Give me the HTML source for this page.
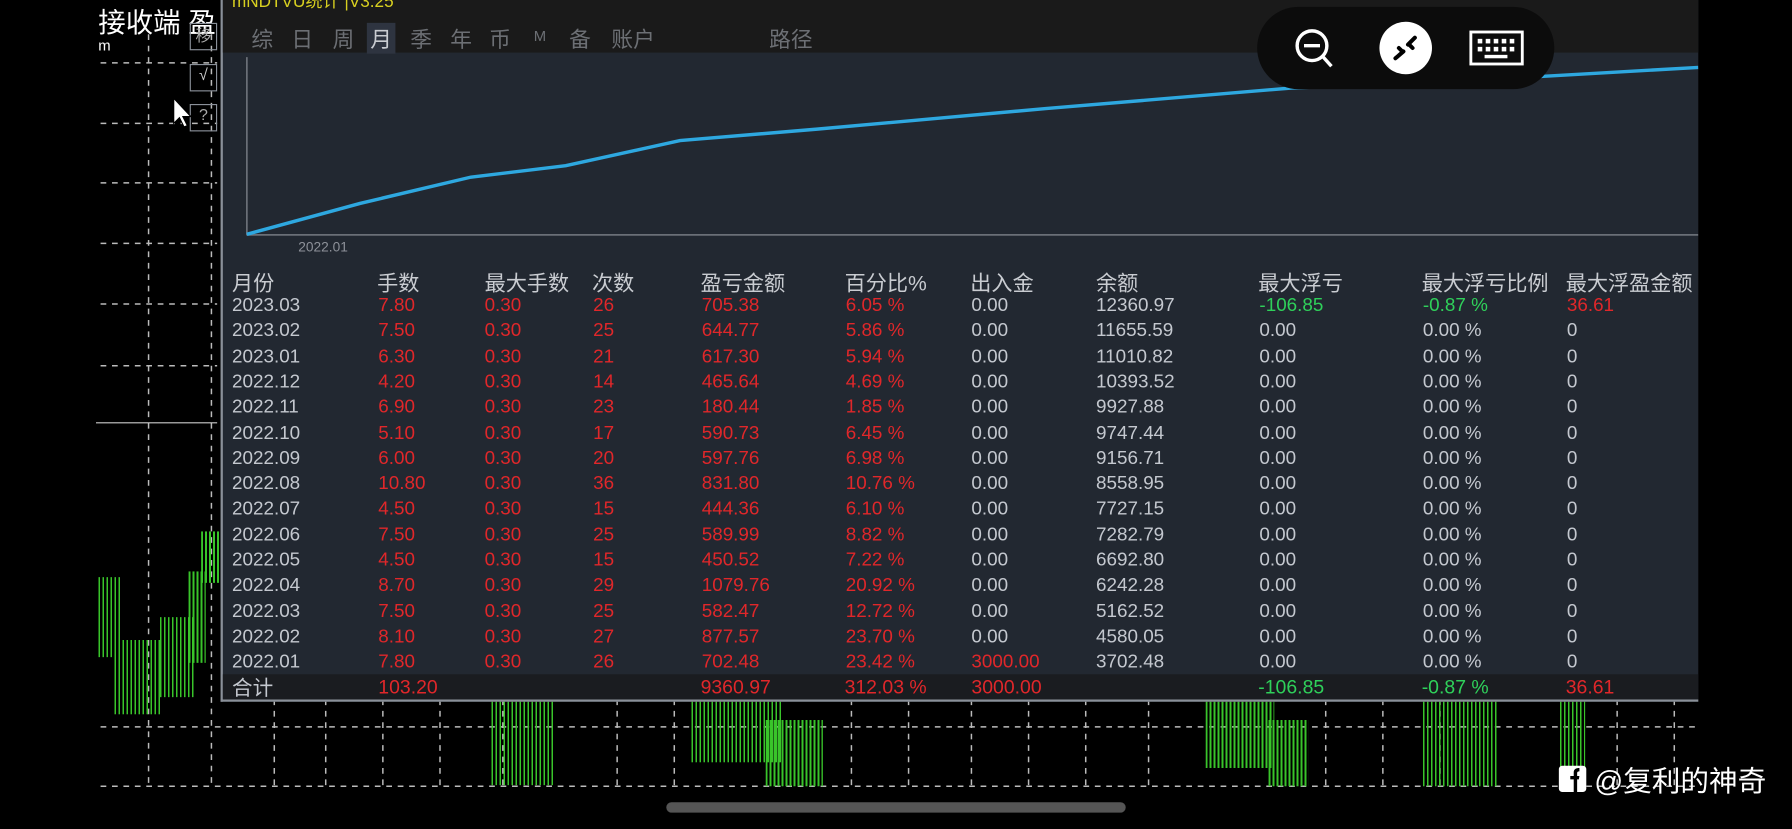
<!DOCTYPE html>
<html><head><meta charset="utf-8"><style>
html,body{margin:0;padding:0;background:#000;width:1792px;height:828px;overflow:hidden}
#w{position:absolute;left:0;top:0;width:1568px;height:725px;transform:scale(1.142857);transform-origin:0 0;background:#000;font-family:"Liberation Sans Narrow","Liberation Sans","Noto Sans CJK SC",sans-serif}
.a{position:absolute;white-space:nowrap}
.panel{position:absolute;left:193px;top:0;width:1291px;height:612px;background:#222831;border-left:2px solid #8a9099;border-bottom:2px solid #8a9099}
.top{position:absolute;left:0;top:0;width:100%;height:46px;background:#1a1a1a}
.tabs span{position:absolute;top:20px;font-size:19px;color:#6c6f74}
.row{position:absolute;left:0;width:100%;height:22px;font-size:16.5px}
.row span{position:absolute;top:0}
.w{color:#c4c8cf}.r{color:#e0272a}.g{color:#2fd05a}.h{color:#c9ccd1;font-size:18.5px}
.cluster{position:absolute;background:repeating-linear-gradient(90deg,#39c42a 0 1.5px,transparent 1.5px 3.5px)}
</style></head><body><div id="w">
<svg class="a" style="left:0;top:0" width="1568" height="725">
<g stroke="#bbb" stroke-width="1.3" stroke-dasharray="5,5" fill="none">
<line x1="88" y1="55" x2="190" y2="55"/><line x1="88" y1="108" x2="190" y2="108"/><line x1="88" y1="160" x2="190" y2="160"/><line x1="88" y1="213" x2="190" y2="213"/><line x1="88" y1="266" x2="190" y2="266"/><line x1="88" y1="320" x2="190" y2="320"/>
<line x1="130" y1="30" x2="130" y2="690"/><line x1="185" y1="30" x2="185" y2="690"/>
<line x1="88" y1="636" x2="1484" y2="636"/><line x1="88" y1="688" x2="1484" y2="688"/>
<line x1="240" y1="612" x2="240" y2="690"/><line x1="285" y1="612" x2="285" y2="690"/><line x1="335" y1="612" x2="335" y2="690"/><line x1="385" y1="612" x2="385" y2="690"/><line x1="440" y1="612" x2="440" y2="690"/><line x1="540" y1="612" x2="540" y2="690"/><line x1="590" y1="612" x2="590" y2="690"/><line x1="745" y1="612" x2="745" y2="690"/><line x1="795" y1="612" x2="795" y2="690"/><line x1="850" y1="612" x2="850" y2="690"/><line x1="900" y1="612" x2="900" y2="690"/><line x1="950" y1="612" x2="950" y2="690"/><line x1="1005" y1="612" x2="1005" y2="690"/><line x1="1160" y1="612" x2="1160" y2="690"/><line x1="1210" y1="612" x2="1210" y2="690"/><line x1="1260" y1="612" x2="1260" y2="690"/><line x1="1415" y1="612" x2="1415" y2="690"/><line x1="1465" y1="612" x2="1465" y2="690"/>
</g>
<line x1="84" y1="370" x2="190" y2="370" stroke="#ccc" stroke-width="1"/>
</svg>
<div class="cluster" style="left:86px;top:505px;width:20px;height:70px"></div>
<div class="cluster" style="left:100px;top:560px;width:40px;height:65px"></div>
<div class="cluster" style="left:140px;top:540px;width:30px;height:70px"></div>
<div class="cluster" style="left:165px;top:500px;width:15px;height:80px"></div>
<div class="cluster" style="left:176px;top:465px;width:16px;height:45px"></div>
<div class="cluster" style="left:430px;top:612px;width:55px;height:75px"></div>
<div class="cluster" style="left:605px;top:612px;width:80px;height:55px"></div>
<div class="cluster" style="left:670px;top:630px;width:50px;height:58px"></div>
<div class="cluster" style="left:1055px;top:612px;width:60px;height:60px"></div>
<div class="cluster" style="left:1110px;top:630px;width:35px;height:58px"></div>
<div class="cluster" style="left:1245px;top:612px;width:65px;height:76px"></div>
<div class="cluster" style="left:1365px;top:612px;width:22px;height:60px"></div>
<div class="a" style="left:86px;top:0;font-size:24px;color:#fff">接收端 盈</div>
<div class="a" style="left:86px;top:32px;font-size:13px;color:#fff">m</div>
<div class="a" style="left:166px;top:20px;width:22px;height:22px;border:1px solid #8a9099;color:#aaa;font-size:14px;text-align:center">移</div>
<div class="a" style="left:166px;top:56px;width:22px;height:22px;border:1px solid #8a9099;color:#ccc;font-size:14px;text-align:center">√</div>
<div class="a" style="left:166px;top:91px;width:22px;height:22px;border:1px solid #8a9099;color:#aaa;font-size:14px;text-align:center">?</div>
<svg class="a" style="left:150px;top:84px" width="20" height="30"><path d="M2 2 L2 24 L7 19 L11 27 L14 26 L10 18 L17 18 Z" fill="#fff" stroke="#000"/></svg>

<div class="panel">
<div class="top"><div class="a" style="left:8px;top:-10px;font-size:15px;color:#d8d020">mNDTVU统计 |V3.25</div>
<div class="tabs"><span style="left:25px">综</span><span style="left:60px">日</span><span style="left:96px">周</span><span style="left:126px;background:#2e3440;color:#c9ccd1;padding:0 3px">月</span><span style="left:164px">季</span><span style="left:199px">年</span><span style="left:233px">币</span><span style="left:272px;font-size:13px;top:24px">M</span><span style="left:303px">备</span><span style="left:340px">账户</span><span style="left:478px">路径</span></div></div>
<svg class="a" style="left:0;top:0" width="1291" height="230">
<line x1="21" y1="50" x2="21" y2="206" stroke="#6a6f77" stroke-width="1.5"/>
<line x1="21" y1="205.5" x2="1291" y2="205.5" stroke="#6a6f77" stroke-width="1.5"/>
<polyline points="21,205 120,178 217,155 300,145 400,123 520,113 720,95 935,77 1100,70 1291,59" fill="none" stroke="#2ea8e0" stroke-width="3"/>
<text x="66" y="220" font-size="12" fill="#8d9199" font-family="Liberation Sans Narrow,Liberation Sans,sans-serif">2022.01</text>
</svg>
<div class="row" style="top:234px"><span class="h" style="left:8px">月份</span><span class="h" style="left:135px">手数</span><span class="h" style="left:229px">最大手数</span><span class="h" style="left:323px">次数</span><span class="h" style="left:418px">盈亏金额</span><span class="h" style="left:544px">百分比%</span><span class="h" style="left:654px">出入金</span><span class="h" style="left:764px">余额</span><span class="h" style="left:906px">最大浮亏</span><span class="h" style="left:1049px">最大浮亏比例</span><span class="h" style="left:1175px">最大浮盈金额</span></div>
<div id="rows"></div>
<div class="a" style="left:0;top:590px;width:100%;height:22px;background:#1a1c20"></div>
<div class="row" style="top:592px;font-size:17px"><span class="w" style="left:8px;font-size:18px;top:-4px">合计</span><span class="r" style="left:136px">103.20</span><span class="r" style="left:418px">9360.97</span><span class="r" style="left:544px">312.03 %</span><span class="r" style="left:655px">3000.00</span><span class="g" style="left:906px">-106.85</span><span class="g" style="left:1049px">-0.87 %</span><span class="r" style="left:1175px">36.61</span></div>
</div>

<div class="a" style="left:1100px;top:6px;width:260px;height:72px;border-radius:36px;background:#0c0c0c"></div>
<svg class="a" style="left:1130px;top:22px" width="40" height="40"><circle cx="18" cy="18" r="13" fill="none" stroke="#fff" stroke-width="3"/><line x1="11" y1="18" x2="25" y2="18" stroke="#fff" stroke-width="3"/><line x1="27" y1="27" x2="35" y2="36" stroke="#fff" stroke-width="3"/></svg>
<svg class="a" style="left:1206px;top:18px" width="48" height="48"><circle cx="24" cy="24" r="23" fill="#fff"/><path d="M15 33 L22 27 M18 24 l3 3 M32 15 L26 21 M30 24 l-3 -3" stroke="#000" stroke-width="3.5" fill="none" stroke-linecap="round"/></svg>
<svg class="a" style="left:1285px;top:26px" width="50" height="34"><rect x="2" y="2" width="45" height="28" fill="none" stroke="#fff" stroke-width="2.5"/><g fill="#fff"><rect x="8" y="8" width="4" height="4"/><rect x="15" y="8" width="4" height="4"/><rect x="22" y="8" width="4" height="4"/><rect x="29" y="8" width="4" height="4"/><rect x="36" y="8" width="4" height="4"/><rect x="8" y="15" width="4" height="4"/><rect x="15" y="15" width="4" height="4"/><rect x="22" y="15" width="4" height="4"/><rect x="29" y="15" width="4" height="4"/><rect x="36" y="15" width="4" height="4"/><rect x="14" y="22" width="20" height="3"/></g></svg>

<svg class="a" style="left:1363px;top:668px" width="26" height="28"><path d="M4 2 H22 A3 3 0 0 1 25 5 V22 A3 3 0 0 1 22 25 H4 A3 3 0 0 1 1 22 V5 A3 3 0 0 1 4 2Z" fill="#fff"/><path d="M14 26 V14 H11 V11 H14 V8 C14 5 16 4 19 4 V7 C17 7 17 8 17 9 V11 H19 L18.5 14 H17 V26Z" fill="#000"/></svg>
<div class="a" style="left:1395px;top:664px;font-size:25px;color:#fff;font-family:'Liberation Sans','Noto Sans CJK SC',sans-serif">@复利的神奇</div>
<div class="a" style="left:583px;top:702px;width:402px;height:9px;border-radius:5px;background:#555"></div>
</div>
<script>
var d=[["2023.03","7.80","26","705.38","6.05 %","0.00","12360.97","-106.85","-0.87 %","36.61"],
["2023.02","7.50","25","644.77","5.86 %","0.00","11655.59"],["2023.01","6.30","21","617.30","5.94 %","0.00","11010.82"],
["2022.12","4.20","14","465.64","4.69 %","0.00","10393.52"],["2022.11","6.90","23","180.44","1.85 %","0.00","9927.88"],
["2022.10","5.10","17","590.73","6.45 %","0.00","9747.44"],["2022.09","6.00","20","597.76","6.98 %","0.00","9156.71"],
["2022.08","10.80","36","831.80","10.76 %","0.00","8558.95"],["2022.07","4.50","15","444.36","6.10 %","0.00","7727.15"],
["2022.06","7.50","25","589.99","8.82 %","0.00","7282.79"],["2022.05","4.50","15","450.52","7.22 %","0.00","6692.80"],
["2022.04","8.70","29","1079.76","20.92 %","0.00","6242.28"],["2022.03","7.50","25","582.47","12.72 %","0.00","5162.52"],
["2022.02","8.10","27","877.57","23.70 %","0.00","4580.05"],["2022.01","7.80","26","702.48","23.42 %","3000.00","3702.48"]];
var h="";d.forEach(function(r,i){var t=258+i*22.3;var c5=r[5]=="0.00"?"w":"r";
var f=r.length>7;
h+='<div class="row" style="top:'+t+'px"><span class="w" style="left:8px">'+r[0]+'</span><span class="r" style="left:136px">'+r[1]+'</span><span class="r" style="left:229px">0.30</span><span class="r" style="left:324px">'+r[2]+'</span><span class="r" style="left:419px">'+r[3]+'</span><span class="r" style="left:545px">'+r[4]+'</span><span class="'+c5+'" style="left:655px">'+r[5]+'</span><span class="w" style="left:764px">'+r[6]+'</span><span class="'+(f?'g':'w')+'" style="left:907px">'+(f?r[7]:'0.00')+'</span><span class="'+(f?'g':'w')+'" style="left:1050px">'+(f?r[8]:'0.00 %')+'</span><span class="'+(f?'r':'w')+'" style="left:1176px">'+(f?r[9]:'0')+'</span></div>';});
document.getElementById("rows").innerHTML=h;
</script>
</body></html>
